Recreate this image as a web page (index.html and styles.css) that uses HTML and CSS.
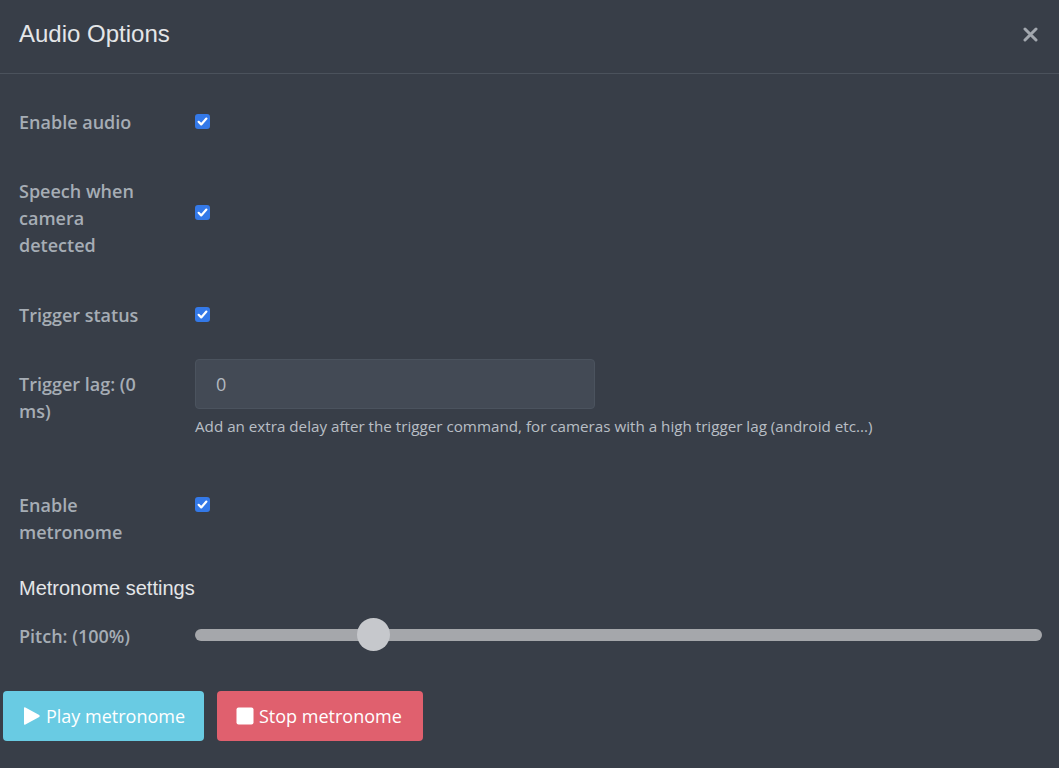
FILE: index.html
```html
<!DOCTYPE html>
<html lang="en">
<head>
    <meta charset="UTF-8">
    <title>Audio Options</title>
    <link rel="stylesheet" href="styles.css">
</head>
<body>
    <div class="modal">
        <header class="modal-header">
            <h1 class="modal-title">Audio Options</h1>
            <button class="close-btn" aria-label="Close">
                <svg width="15" height="15" viewBox="0 0 15 15"><path d="M2 2 L13 13 M13 2 L2 13" stroke="#a2a7ae" stroke-width="3" stroke-linecap="round"/></svg>
            </button>
        </header>

        <div class="modal-body">
            <div class="form-row">
                <label class="form-label">Enable audio</label>
                <div class="form-control-wrap">
                    <span class="check"><svg width="15" height="15" viewBox="0 0 15 15"><path d="M3.6 7.8 L6.2 10.4 L11.4 4.6" fill="none" stroke="#fff" stroke-width="2.2" stroke-linecap="round" stroke-linejoin="round"/></svg></span>
                </div>
            </div>

            <div class="form-row row-speech">
                <label class="form-label">Speech when camera detected</label>
                <div class="form-control-wrap">
                    <span class="check check-mid"><svg width="15" height="15" viewBox="0 0 15 15"><path d="M3.6 7.8 L6.2 10.4 L11.4 4.6" fill="none" stroke="#fff" stroke-width="2.2" stroke-linecap="round" stroke-linejoin="round"/></svg></span>
                </div>
            </div>

            <div class="form-row row-status">
                <label class="form-label">Trigger status</label>
                <div class="form-control-wrap">
                    <span class="check"><svg width="15" height="15" viewBox="0 0 15 15"><path d="M3.6 7.8 L6.2 10.4 L11.4 4.6" fill="none" stroke="#fff" stroke-width="2.2" stroke-linecap="round" stroke-linejoin="round"/></svg></span>
                </div>
            </div>

            <div class="form-row row-lag">
                <label class="form-label label-pad">Trigger lag: (0 ms)</label>
                <div class="form-control-wrap">
                    <input class="text-input" type="text" value="0">
                    <p class="help-text">Add an extra delay after the trigger command, for cameras with a high trigger lag (android etc...)</p>
                </div>
            </div>

            <div class="form-row row-metronome">
                <label class="form-label">Enable metronome</label>
                <div class="form-control-wrap">
                    <span class="check"><svg width="15" height="15" viewBox="0 0 15 15"><path d="M3.6 7.8 L6.2 10.4 L11.4 4.6" fill="none" stroke="#fff" stroke-width="2.2" stroke-linecap="round" stroke-linejoin="round"/></svg></span>
                </div>
            </div>

            <h2 class="section-title">Metronome settings</h2>

            <div class="form-row row-pitch">
                <label class="form-label">Pitch: (100%)</label>
                <div class="form-control-wrap">
                    <div class="slider">
                        <div class="slider-thumb" style="left: 21%"></div>
                    </div>
                </div>
            </div>
        </div>

        <div class="button-bar">
            <button class="btn btn-play">
                <svg width="19" height="20" viewBox="0 0 19 20"><path d="M2 2.2 Q2 0.6 3.4 1.4 L17.2 9 Q18.4 10 17.2 11 L3.4 18.6 Q2 19.4 2 17.8 Z" fill="#fff"/></svg>
                Play metronome
            </button>
            <button class="btn btn-stop">
                <svg width="18" height="18" viewBox="0 0 18 18"><rect x="0.5" y="0.5" width="17" height="17" rx="2" fill="#fff"/></svg>
                Stop metronome
            </button>
        </div>
    </div>
</body>
</html>
```

FILE: styles.css
```css
* {
    margin: 0;
    padding: 0;
    box-sizing: border-box;
}

body {
    background-color: #383e48;
    font-family: 'Open Sans', 'Noto Sans', sans-serif;
    overflow: hidden;
}

.modal {
    width: 1059px;
    height: 768px;
}

.modal-header {
    height: 74px;
    padding: 0 21px 0 19px;
    border-bottom: 1px solid #4b525c;
    display: flex;
    align-items: center;
    justify-content: space-between;
}

.modal-title {
    font-family: 'Liberation Sans', Arial, sans-serif;
    font-weight: normal;
    font-size: 24px;
    color: #e4e6e8;
    margin-top: -5px;
}

.close-btn {
    background: none;
    border: none;
    width: 15px;
    height: 15px;
    display: flex;
    margin-top: -4px;
}

.modal-body {
    padding: 35px 17px 0 19px;
}

.form-row {
    display: grid;
    grid-template-columns: 176px 1fr;
}

.form-label {
    font-weight: 600;
    font-size: 18px;
    line-height: 27px;
    color: #a6adb5;
    padding-right: 40px;
}

.label-pad {
    padding-top: 12px;
}

.check {
    display: flex;
    width: 15px;
    height: 15px;
    margin-top: 5px;
    border-radius: 3px;
    background-color: #3479e8;
}

.check-mid {
    margin-top: 27px;
}

.row-speech {
    margin-top: 42px;
}

.row-status {
    margin-top: 43px;
}

.row-lag {
    margin-top: 30px;
}

.text-input {
    width: 400px;
    height: 50px;
    padding: 0 20px;
    background-color: #434a55;
    border: 1px solid #4b535e;
    border-radius: 4px;
    color: #b3b9c0;
    font-family: inherit;
    font-size: 18px;
    outline: none;
}

.help-text {
    margin-top: 6px;
    font-size: 15.2px;
    line-height: 22px;
    color: #b9bec5;
}

.row-metronome {
    margin-top: 55px;
}

.section-title {
    margin-top: 28px;
    font-family: 'Liberation Sans', Arial, sans-serif;
    font-weight: normal;
    font-size: 20px;
    line-height: 28px;
    color: #e4e6e8;
}

.row-pitch {
    margin-top: 21px;
}

.slider {
    position: relative;
    height: 12px;
    margin-top: 6px;
    border-radius: 6px;
    background-color: #a5a7ab;
}

.slider-thumb {
    position: absolute;
    top: -11px;
    width: 33px;
    height: 33px;
    margin-left: -16px;
    border-radius: 50%;
    background-color: #c6c8cc;
}

.button-bar {
    display: flex;
    gap: 13px;
    padding: 41px 3px 0;
}

.btn {
    height: 50px;
    display: flex;
    align-items: center;
    gap: 5px;
    padding: 0 0 0 19px;
    border: none;
    border-radius: 4px;
    color: #fff;
    font-family: inherit;
    font-size: 18px;
    white-space: nowrap;
}

.btn-play {
    width: 201px;
    background-color: #69cbe3;
}

.btn-stop {
    width: 206px;
    background-color: #e0606e;
}
```
